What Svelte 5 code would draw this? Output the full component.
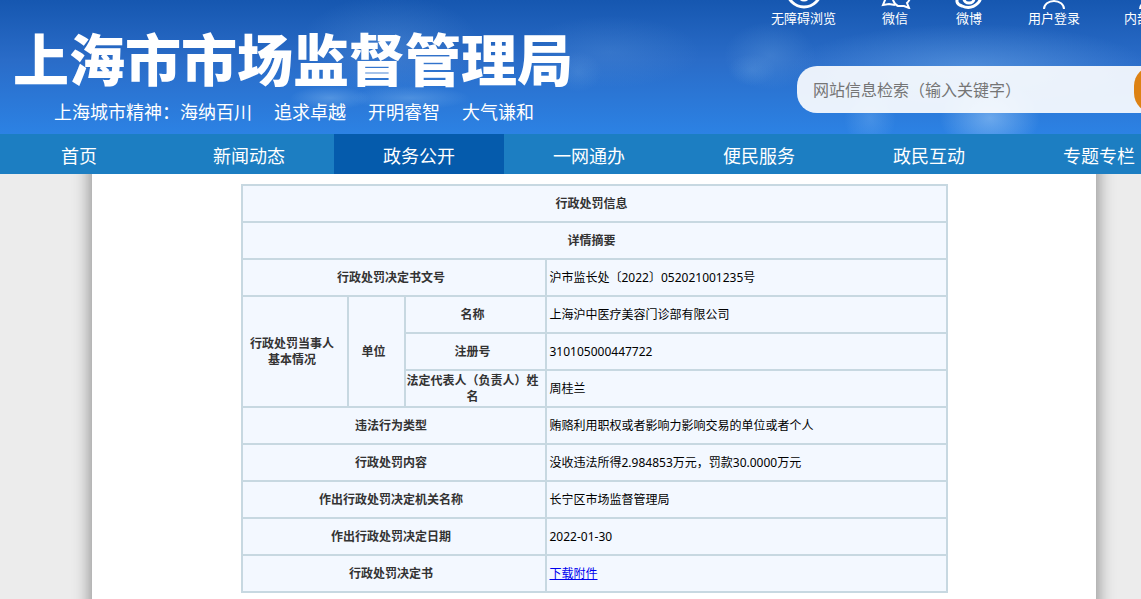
<script>
    let keyword = "";

    const navItems = ["首页", "新闻动态", "政务公开", "一网通办", "便民服务", "政民互动", "专题专栏"];
    let active = "政务公开";

    const spirit = ["上海城市精神：海纳百川", "追求卓越", "开明睿智", "大气谦和"];

    // rows below the party block
    const details = [
        ["违法行为类型", "贿赂利用职权或者影响力影响交易的单位或者个人"],
        ["行政处罚内容", "没收违法所得2.984853万元，罚款30.0000万元"],
        ["作出行政处罚决定机关名称", "长宁区市场监督管理局"],
        ["作出行政处罚决定日期", "2022-01-30"]
    ];
</script>

<div class="page">
    <header>
        <div class="clouds"></div>
        <div class="brand">
            <h1>上海市市场监督管理局</h1>
            <p>
                {#each spirit as phrase}
                    <span>{phrase}</span>
                {/each}
            </p>
        </div>
        <div class="tools">
            <ul class="links">
                <li>
                    <a href="#accessible">
                        <svg viewBox="0 0 38 34"><circle cx="19" cy="15" r="17" /><circle cx="19" cy="20" r="5" /></svg>
                        无障碍浏览
                    </a>
                </li>
                <li>
                    <a href="#wechat">
                        <svg class="thin" viewBox="0 0 38 34"><path d="M11 20L7 30L13 29L19 30M16 20Q17 29 22 31L28 31L33 33L31 28Q35 24 34 20" /></svg>
                        微信
                    </a>
                </li>
                <li>
                    <a href="#weibo">
                        <svg viewBox="0 0 38 34"><path d="M10 20Q3 28 12 31Q21 35 28 28Q32 24 29 20" /><ellipse cx="19" cy="24" rx="5" ry="4" /></svg>
                        微博
                    </a>
                </li>
                <li>
                    <a href="#login">
                        <svg class="thin" viewBox="0 0 38 34"><circle cx="19" cy="13" r="7" /><path d="M9 34a10 8 0 0 1 20 0" /></svg>
                        用户登录
                    </a>
                </li>
                <li>
                    <a href="#mail">
                        <svg class="thin" viewBox="0 0 38 34"><circle cx="19" cy="13" r="7" /><path d="M9 34a10 8 0 0 1 20 0" /></svg>
                        内部邮箱
                    </a>
                </li>
            </ul>
            <form class="search" on:submit|preventDefault>
                <input type="text" aria-label="网站信息检索" placeholder="网站信息检索（输入关键字）" bind:value={keyword}>
                <button type="submit" aria-label="搜索"></button>
            </form>
        </div>
    </header>

    <nav>
        {#each navItems as item}
            <a href="#{item}" class:active={item === active} on:click={() => (active = item)}>{item}</a>
        {/each}
    </nav>

    <main>
        <table>
            <colgroup>
                <col class="party">
                <col class="unit">
                <col class="field">
                <col>
            </colgroup>
            <tbody>
                <tr><th colspan="4">行政处罚信息</th></tr>
                <tr><th colspan="4">详情摘要</th></tr>
                <tr>
                    <th colspan="3">行政处罚决定书文号</th>
                    <td>沪市监长处〔2022〕052021001235号</td>
                </tr>
                <tr>
                    <th rowspan="3">行政处罚当事人<br>基本情况</th>
                    <th rowspan="3">单位</th>
                    <th>名称</th>
                    <td>上海沪中医疗美容门诊部有限公司</td>
                </tr>
                <tr>
                    <th>注册号</th>
                    <td>310105000447722</td>
                </tr>
                <tr>
                    <th>法定代表人（负责人）姓名</th>
                    <td>周桂兰</td>
                </tr>
                {#each details as [label, value]}
                    <tr>
                        <th colspan="3">{label}</th>
                        <td>{value}</td>
                    </tr>
                {/each}
                <tr>
                    <th colspan="3">行政处罚决定书</th>
                    <td><a href="#download">下载附件</a></td>
                </tr>
            </tbody>
        </table>
    </main>
</div>

<style>
    :global(body) {
        background-color: #ececec;
        overflow-x: hidden;
    }

    .page {
        min-width: 1188px;
        font-family: "Noto Sans", "Noto Sans CJK SC", sans-serif;
        font-size: 12px;
        line-height: 16px;
    }

    header {
        position: relative;
        display: flex;
        height: 134px;
        overflow: hidden;
        color: #fff;
        background: linear-gradient(#1657b0, #2a6cc8 45%, #2c82e4);
    }

    /* soft clouds over the sky */
    .clouds {
        position: absolute;
        inset: 0;
        background:
            radial-gradient(ellipse 40px 12px at 330px 98px, rgba(140, 190, 240, 0.4), transparent),
            radial-gradient(ellipse 90px 50px at 390px 45px, rgba(140, 190, 240, 0.2), transparent),
            radial-gradient(ellipse 60px 12px at 410px 98px, rgba(140, 190, 240, 0.35), transparent),
            radial-gradient(ellipse 90px 36px at 610px 52px, rgba(110, 165, 225, 0.2), transparent),
            radial-gradient(ellipse 24px 20px at 578px 72px, rgba(110, 165, 225, 0.25), transparent),
            radial-gradient(ellipse 46px 34px at 770px 56px, rgba(110, 165, 225, 0.3), transparent),
            radial-gradient(ellipse 24px 16px at 752px 70px, rgba(110, 165, 225, 0.25), transparent),
            radial-gradient(ellipse 180px 44px at 970px 68px, rgba(130, 185, 240, 0.4), transparent),
            radial-gradient(ellipse 50px 36px at 990px 118px, rgba(170, 210, 250, 0.5), transparent),
            radial-gradient(ellipse 26px 30px at 870px 118px, rgba(150, 200, 250, 0.25), transparent);
    }

    .brand {
        position: relative;
        flex: 1;
        padding: 27px 0 0 13px;
    }

    h1 {
        margin: 0;
        font-size: 56px;
        line-height: 64px;
        font-weight: 900;
        white-space: nowrap;
    }

    p {
        display: flex;
        gap: 22px;
        margin: 9px 0 0 41px;
        font-size: 18px;
        line-height: 24px;
    }

    .tools {
        position: relative;
        width: 417px;
    }

    /* the icon row is tucked under the top edge */
    .links {
        display: flex;
        gap: 44px;
        margin: -25px 0 0;
        padding: 0;
        list-style: none;
    }

    .links a {
        display: flex;
        flex-direction: column;
        align-items: center;
        min-width: 30px;
        font-size: 13px;
        line-height: 18px;
        color: #fff;
        text-decoration: none;
        white-space: nowrap;
    }

    svg {
        width: 38px;
        height: 34px;
        margin: 0 -4px;
        fill: none;
        stroke: #fff;
        stroke-width: 3;
    }

    svg.thin {
        stroke-width: 2;
    }

    .search {
        display: flex;
        height: 47px;
        margin: 39px 0 0 26px;
        border-radius: 20px;
        background-color: rgba(255, 255, 255, 0.9);
        overflow: hidden;
    }

    .search input {
        width: 337px;
        box-sizing: border-box;
        padding: 0 16px;
        border: none;
        outline: none;
        background: none;
        font-family: inherit;
        font-size: 16px;
    }

    .search input::placeholder {
        color: #757575;
    }

    .search button {
        flex: 1;
        border: none;
        border-radius: 20px;
        background-color: #dd8213;
        cursor: pointer;
    }

    nav {
        position: relative;
        display: flex;
        height: 40px;
        margin: 0 -6px;
        background-color: #1c7ec2;
    }

    nav a {
        width: 170px;
        font-size: 18px;
        line-height: 44px;
        text-align: center;
        color: #fff;
        text-decoration: none;
    }

    nav a.active {
        background-color: #055bac;
    }

    /* starts behind the nav so the side shadow is even from the top */
    main {
        width: 1004px;
        box-sizing: border-box;
        margin: -40px auto 0;
        padding: 50px 0 40px;
        background-color: #fff;
        box-shadow: 0 0 16px 2px rgba(0, 0, 0, 0.4);
    }

    table {
        width: 707px;
        margin: 0 auto;
        border-collapse: collapse;
        table-layout: fixed;
        background-color: #f3f8ff;
    }

    .party {
        width: 106px;
    }

    .unit {
        width: 57px;
    }

    .field {
        width: 141px;
    }

    th,
    td {
        box-sizing: border-box;
        height: 37px;
        padding: 0 3px;
        border: 2px solid #c7d8e1;
    }

    th {
        padding: 0 5px 0 0;
        color: #333;
    }
</style>
